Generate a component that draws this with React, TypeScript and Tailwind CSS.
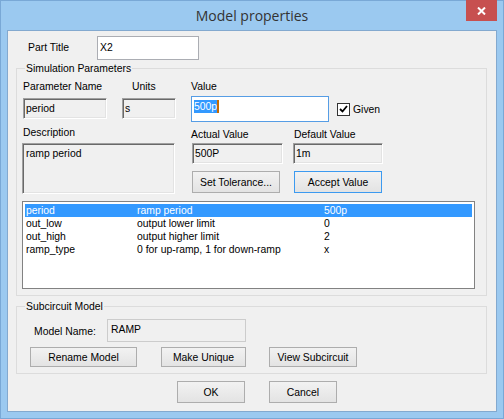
import type { ReactNode } from "react";

const sunken =
  "border border-t-[#a0a0a0] border-l-[#a0a0a0] border-b-white border-r-white shadow-[inset_1px_1px_0_#696969,inset_-1px_-1px_0_#e3e3e3] bg-[#f0f0f0]";

function Btn({ children, className }: { children: ReactNode; className: string }) {
  return (
    <div
      className={
        "flex items-center justify-center border bg-gradient-to-b from-[#f2f2f2] to-[#e3e3e3] text-black " +
        className
      }
    >
      {children}
    </div>
  );
}

const rows = [
  { name: "period", desc: "ramp period", value: "500p", selected: true },
  { name: "out_low", desc: "output lower limit", value: "0" },
  { name: "out_high", desc: "output higher limit", value: "2" },
  { name: "ramp_type", desc: "0 for up-ramp, 1 for down-ramp", value: "x" },
];

export default function App() {
  return (
    <div className="relative flex h-[419px] w-[504px] flex-col border border-[#79a8d6] bg-[#9bc9f0] px-[6px] pb-[6px] font-['Liberation_Sans',Arial,sans-serif] text-[10.4px] leading-[13px] text-black">
      {/* caption */}
      <div className="flex h-[29px] items-center justify-center font-['Open_Sans',sans-serif] text-[14px] text-[#333333]">
        Model properties
      </div>
      <div className="absolute left-[465px] top-[-1px] flex h-[21px] w-[31px] items-center justify-center bg-[#c75050]">
        <svg width="9" height="8" viewBox="0 0 9 8">
          <path d="M1 0.5 L8 7.5 M8 0.5 L1 7.5" stroke="white" strokeWidth="2" />
        </svg>
      </div>

      {/* client */}
      <div className="flex h-[382px] flex-col border border-[#83a9cf] bg-[#f0f0f0]">
        <div className="mt-[5px] flex h-[23px] items-center">
          <span className="ml-[20px] w-[69px]">Part Title</span>
          <div className="flex h-[24px] w-[102px] items-start border border-[#abadb3] bg-white pl-[2px] pt-[4px]">
            X2
          </div>
        </div>

        {/* Simulation Parameters */}
        <div className="relative ml-[8px] mt-[9px] flex h-[228px] w-[471px] flex-col border border-[#dcdcdc]">
          <span className="absolute left-[8px] top-[-7px] bg-[#f0f0f0] px-[1px]">Simulation Parameters</span>
          <div className="flex pt-[11px]">
            <div className="ml-[5px] flex w-[154px] flex-col">
              <div className="flex h-[13px]">
                <span className="ml-[1px] w-[109px]">Parameter Name</span>
                <span>Units</span>
              </div>
              <div className="mt-[5px] flex">
                <div className={"ml-[1px] flex h-[21px] w-[84px] items-center pl-[2px] " + sunken}>period</div>
                <div className={"ml-[15px] flex h-[21px] w-[54px] items-center pl-[2px] " + sunken}>s</div>
              </div>
              <span className="ml-[1px] mt-[7px] h-[13px]">Description</span>
              <div className={"mt-[4px] h-[51px] w-[153px] pl-[3px] pt-[3px] " + sunken}>ramp period</div>
            </div>

            <div className="ml-[15px] flex flex-col">
              <span className="h-[13px]">Value</span>
              <div className="mt-[3px] flex items-center">
                <div className="flex h-[26px] w-[138px] items-start border border-[#569de5] bg-white pl-[2px] pt-[3px]">
                  <span className="bg-[#3399ff] text-white">500p</span>
                  <span className="h-[13px] w-[2px] bg-[#c86a00]" />
                </div>
                <div className="ml-[8px] flex h-[13px] w-[13px] items-center justify-center border border-[#333333] bg-white">
                  <svg width="9" height="8" viewBox="0 0 9 8">
                    <path d="M1 4 L3.5 6.5 L8 1" stroke="black" strokeWidth="1.8" fill="none" />
                  </svg>
                </div>
                <span className="ml-[3px]">Given</span>
              </div>
              <div className="mt-[6px] flex h-[13px]">
                <span className="w-[103px]">Actual Value</span>
                <span>Default Value</span>
              </div>
              <div className="mt-[2px] flex">
                <div className={"ml-[1px] flex h-[21px] w-[91px] items-center pl-[2px] " + sunken}>500P</div>
                <div className={"ml-[10px] flex h-[21px] w-[90px] items-center pl-[2px] " + sunken}>1m</div>
              </div>
              <div className="mt-[7px] flex">
                <Btn className="ml-[1px] h-[22px] w-[88px] border-[#adadad]">Set Tolerance...</Btn>
                <Btn className="ml-[14px] h-[22px] w-[88px] border-[#3c9af0]">Accept Value</Btn>
              </div>
            </div>
          </div>

          <div className="ml-[5px] mt-[7px] flex h-[88px] w-[453px] flex-col border border-[#828282] bg-white p-[2px]">
            {rows.map((r) => (
              <div
                key={r.name}
                className={
                  "flex h-[13px] pl-[1px] " + (r.selected ? "bg-[#3399ff] text-white" : "text-black")
                }
              >
                <span className="w-[111px]">{r.name}</span>
                <span className="w-[187px]">{r.desc}</span>
                <span>{r.value}</span>
              </div>
            ))}
          </div>
        </div>

        {/* Subcircuit Model */}
        <div className="relative ml-[8px] mt-[10px] flex h-[68px] w-[471px] flex-col border border-[#dcdcdc]">
          <span className="absolute left-[8px] top-[-7px] bg-[#f0f0f0] px-[1px]">Subcircuit Model</span>
          <div className="mt-[12px] flex h-[23px] items-center">
            <span className="ml-[17px] mt-[2px] w-[73px]">Model Name:</span>
            <div className="h-[23px] w-[139px] border border-[#cccccc] bg-[#f0f0f0] pl-[3px] pt-[3px]">RAMP</div>
          </div>
          <div className="mt-[5px] flex">
            <Btn className="ml-[13px] h-[20px] w-[107px] border-[#adadad]">Rename Model</Btn>
            <Btn className="ml-[24px] h-[20px] w-[85px] border-[#adadad]">Make Unique</Btn>
            <Btn className="ml-[23px] h-[20px] w-[88px] border-[#adadad]">View Subcircuit</Btn>
          </div>
        </div>

        <div className="mt-[7px] flex">
          <Btn className="ml-[169px] h-[22px] w-[68px] border-[#adadad]">OK</Btn>
          <Btn className="ml-[24px] h-[22px] w-[68px] border-[#adadad]">Cancel</Btn>
        </div>
      </div>
    </div>
  );
}
